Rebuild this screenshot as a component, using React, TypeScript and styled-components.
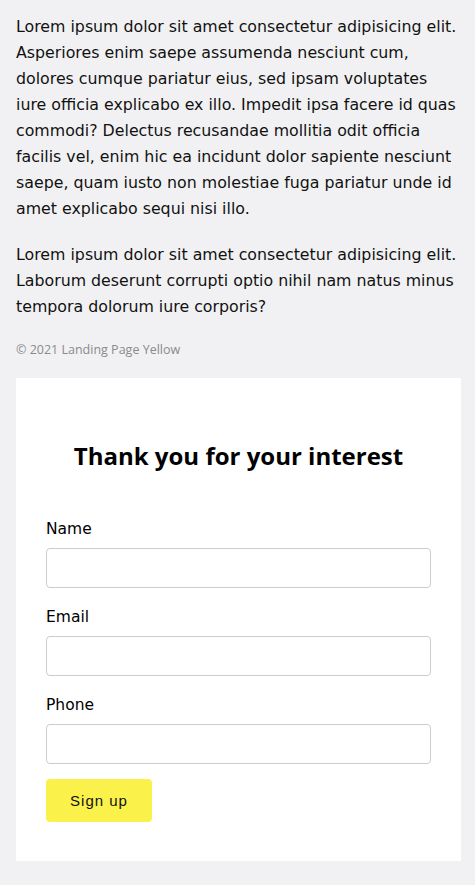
import * as React from 'react'
import styled, { createGlobalStyle } from 'styled-components'

const GlobalStyle = createGlobalStyle`
  html, body {
    margin: 0;
    padding: 0;
    background: #f1f1f3;
  }
  body {
    font-family: 'DejaVu Sans', 'Open Sans', sans-serif;
    color: #111;
  }
`

const Page = styled.div`
  padding: 14px 14px 23px 16px;
`

const Text = styled.p`
  margin: 0 0 20px;
  font-size: 15.8px;
  line-height: 26px;
`

// keep the wrap points of the original layout
const Line = styled.span`
  display: block;
  white-space: nowrap;
`

const Copyright = styled.div`
  margin: 19px 0 18px;
  font-family: 'Open Sans', sans-serif;
  font-size: 12.5px;
  line-height: 20px;
  color: #8a8a8c;
`

const Card = styled.div`
  background: #fff;
  padding: 40px 30px 39px;
`

const Title = styled.h2`
  margin: 20px 0 42px;
  text-align: center;
  font-family: 'Open Sans', sans-serif;
  font-size: 24px;
  line-height: 36px;
  font-weight: 700;
  color: #000;
`

const Field = styled.div`
  margin-bottom: 16px;
`

const Label = styled.label`
  display: block;
  margin-bottom: 6px;
  font-size: 15.5px;
  line-height: 26px;
  color: #000;
`

const Input = styled.input`
  display: block;
  box-sizing: border-box;
  width: 100%;
  height: 40px;
  border: 1px solid #c9cdd3;
  border-radius: 4px;
  background: #fff;
  font: inherit;
`

const Button = styled.button`
  display: block;
  width: 106px;
  height: 43px;
  margin-top: -1px;
  border: none;
  border-radius: 4px;
  background: #faf24a;
  color: #111;
  font-family: 'Liberation Sans', Arial, sans-serif;
  font-size: 15px;
  letter-spacing: 1px;
  cursor: pointer;
`

const intro = [
  'Lorem ipsum dolor sit amet consectetur adipisicing elit.',
  'Asperiores enim saepe assumenda nesciunt cum,',
  'dolores cumque pariatur eius, sed ipsam voluptates',
  'iure officia explicabo ex illo. Impedit ipsa facere id quas',
  'commodi? Delectus recusandae mollitia odit officia',
  'facilis vel, enim hic ea incidunt dolor sapiente nesciunt',
  'saepe, quam iusto non molestiae fuga pariatur unde id',
  'amet explicabo sequi nisi illo.',
]

const outro = [
  'Lorem ipsum dolor sit amet consectetur adipisicing elit.',
  'Laborum deserunt corrupti optio nihil nam natus minus',
  'tempora dolorum iure corporis?',
]

const fields = ['Name', 'Email', 'Phone']

export default function App() {
  return (
    <>
      <GlobalStyle />
      <Page>
        <Text>
          {intro.map((l) => (
            <Line key={l}>{l}</Line>
          ))}
        </Text>
        <Text>
          {outro.map((l) => (
            <Line key={l}>{l}</Line>
          ))}
        </Text>
        <Copyright>© 2021 Landing Page Yellow</Copyright>
        <Card>
          <Title>Thank you for your interest</Title>
          <form onSubmit={(e) => e.preventDefault()}>
            {fields.map((f) => (
              <Field key={f}>
                <Label htmlFor={f.toLowerCase()}>{f}</Label>
                <Input id={f.toLowerCase()} type="text" />
              </Field>
            ))}
            <Button type="submit">Sign up</Button>
          </form>
        </Card>
      </Page>
    </>
  )
}
